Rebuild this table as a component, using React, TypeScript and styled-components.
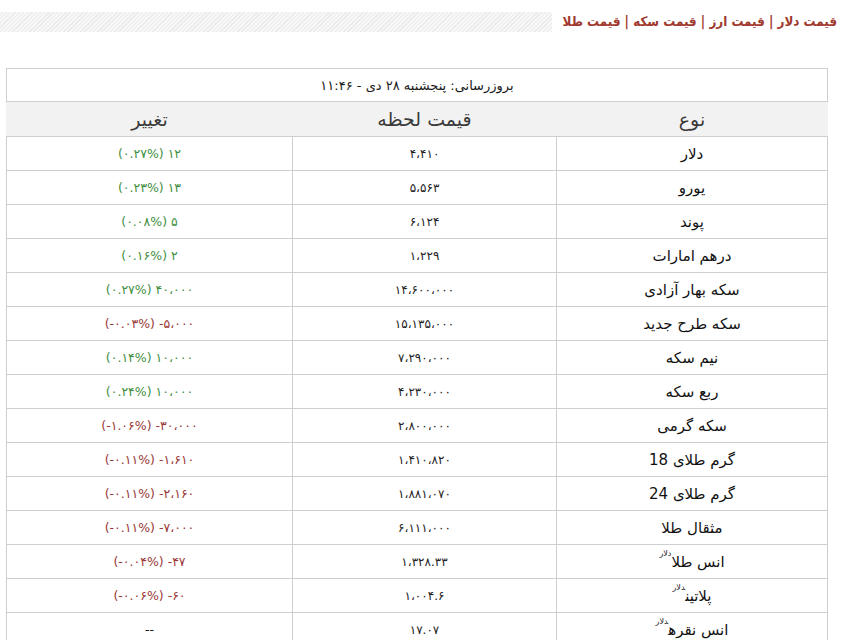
import styled, { createGlobalStyle } from 'styled-components';

interface Row {
  name: string;
  unit?: string;
  price: string;
  change: string;
  pct: string;
  trend: 'up' | 'down' | 'none';
}

const rows: Row[] = [
  { name: 'دلار', price: '۴،۴۱۰', change: '۱۲', pct: '(۰.۲۷%)', trend: 'up' },
  { name: 'یورو', price: '۵،۵۶۳', change: '۱۳', pct: '(۰.۲۳%)', trend: 'up' },
  { name: 'پوند', price: '۶،۱۲۴', change: '۵', pct: '(۰.۰۸%)', trend: 'up' },
  { name: 'درهم امارات', price: '۱،۲۲۹', change: '۲', pct: '(۰.۱۶%)', trend: 'up' },
  { name: 'سکه بهار آزادی', price: '۱۴،۶۰۰،۰۰۰', change: '۴۰،۰۰۰', pct: '(۰.۲۷%)', trend: 'up' },
  { name: 'سکه طرح جدید', price: '۱۵،۱۳۵،۰۰۰', change: '-۵،۰۰۰', pct: '(-۰.۰۳%)', trend: 'down' },
  { name: 'نیم سکه', price: '۷،۲۹۰،۰۰۰', change: '۱۰،۰۰۰', pct: '(۰.۱۴%)', trend: 'up' },
  { name: 'ربع سکه', price: '۴،۲۳۰،۰۰۰', change: '۱۰،۰۰۰', pct: '(۰.۲۴%)', trend: 'up' },
  { name: 'سکه گرمی', price: '۲،۸۰۰،۰۰۰', change: '-۳۰،۰۰۰', pct: '(-۱.۰۶%)', trend: 'down' },
  { name: 'گرم طلای 18', price: '۱،۴۱۰،۸۲۰', change: '-۱،۶۱۰', pct: '(-۰.۱۱%)', trend: 'down' },
  { name: 'گرم طلای 24', price: '۱،۸۸۱،۰۷۰', change: '-۲،۱۶۰', pct: '(-۰.۱۱%)', trend: 'down' },
  { name: 'مثقال طلا', price: '۶،۱۱۱،۰۰۰', change: '-۷،۰۰۰', pct: '(-۰.۱۱%)', trend: 'down' },
  { name: 'انس طلا', unit: 'دلار', price: '۱،۳۲۸.۳۳', change: '-۴۷', pct: '(-۰.۰۴%)', trend: 'down' },
  { name: 'پلاتین', unit: 'دلار', price: '۱،۰۰۴.۶', change: '-۶۰', pct: '(-۰.۰۶%)', trend: 'down' },
  { name: 'انس نقره', unit: 'دلار', price: '۱۷.۰۷', change: '--', pct: '', trend: 'none' },
];

const GlobalStyle = createGlobalStyle`
  body {
    margin: 0;
    background: #fff;
    font-family: Tahoma, "DejaVu Sans", sans-serif;
  }
`;

const App = () => {
  return (
    <Page dir="rtl">
      <GlobalStyle />
      <TopBar>
        <Title>قیمت دلار | قیمت ارز | قیمت سکه | قیمت طلا</Title>
        <Stripe />
      </TopBar>
      <Table>
        <colgroup>
          <col style={{ width: 271 }} />
          <col style={{ width: 264 }} />
          <col style={{ width: 286 }} />
        </colgroup>
        <thead>
          <tr>
            <Caption colSpan={3}>بروزرسانی: پنجشنبه ۲۸ دی - ۱۱:۴۶</Caption>
          </tr>
          <tr>
            <Head>نوع</Head>
            <Head>قیمت لحظه</Head>
            <Head>تغییر</Head>
          </tr>
        </thead>
        <tbody>
          {rows.map((r) => (
            <tr key={r.name}>
              <NameCell>
                {r.name}
                {r.unit && <Unit>{r.unit}</Unit>}
              </NameCell>
              <PriceCell>{r.price}</PriceCell>
              <Cell>
                <Change $trend={r.trend}>
                  <Num dir="ltr">{r.change}</Num>
                  {r.pct && ' '}
                  {r.pct && <Num dir="ltr">{r.pct}</Num>}
                </Change>
              </Cell>
            </tr>
          ))}
        </tbody>
      </Table>
    </Page>
  );
};

export default App;

const Page = styled.div`
  padding: 10px 14px 0 7px;
  width: 842px;
  box-sizing: border-box;
  height: 640px;
  overflow: hidden;
`;

const TopBar = styled.div`
  display: flex;
  align-items: center;
  gap: 11px;
  height: 22px;
  margin: 0 -14px 0 -7px;
  padding-right: 5px;
`;

const Title = styled.h1`
  margin: 0;
  font-family: "DejaVu Sans Condensed", "DejaVu Sans", sans-serif;
  font-weight: bold;
  font-size: 13.3px;
  color: #a0392f;
  white-space: nowrap;
`;

const Stripe = styled.div`
  flex: 1;
  height: 20px;
  margin-top: 2px;
  background: repeating-linear-gradient(
    -45deg,
    #eaeaea 0,
    #eaeaea 1px,
    #f7f7f7 1px,
    #f7f7f7 3px
  );
`;

const Table = styled.table`
  margin-top: 36px;
  width: 100%;
  border-collapse: collapse;
  table-layout: fixed;
  font-size: 13px;
  color: #1a1a1a;
`;

const Caption = styled.th`
  height: 32px;
  padding: 0;
  border: 1px solid #cfcfcf;
  font-weight: normal;
  font-size: 13px;
  color: #1a1a1a;
  text-align: center;
`;

const Head = styled.th`
  height: 34px;
  padding: 0;
  background: #f2f2f2;
  font-family: "DejaVu Sans", sans-serif;
  font-weight: normal;
  font-size: 19px;
  color: #3a3a3a;
  text-align: center;
`;

const Cell = styled.td`
  height: 33px;
  padding: 0;
  border: 1px solid #cfcfcf;
  text-align: center;
`;

const NameCell = styled(Cell)`
  font-size: 15px;
  color: #111;
`;

const PriceCell = styled(Cell)`
  font-size: 12px;
  color: #222;
`;

const Unit = styled.sup`
  font-size: 8px;
  vertical-align: 11px;
  line-height: 0;
`;

const Change = styled.span<{ $trend: 'up' | 'down' | 'none' }>`
  color: ${(p) => (p.$trend === 'up' ? '#3f8f3f' : p.$trend === 'down' ? '#9a3838' : '#111')};
  font-size: 12.5px;
`;

const Num = styled.span`
  unicode-bidi: isolate;
`;
